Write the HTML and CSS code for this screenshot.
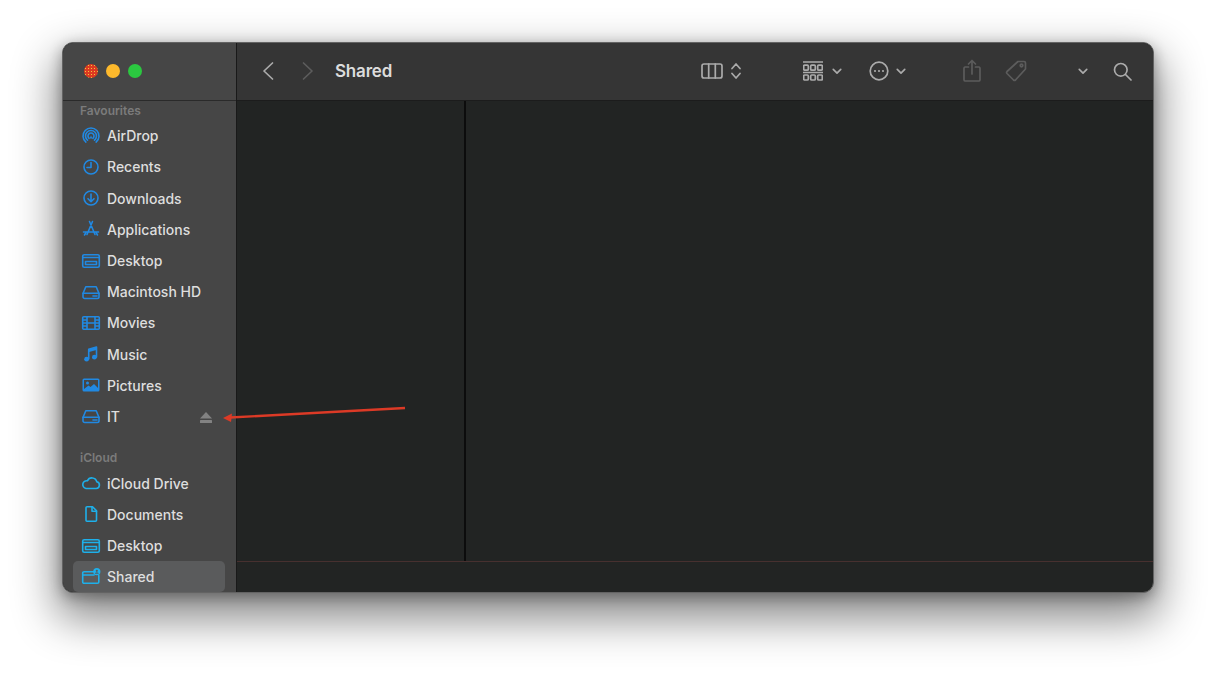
FILE: index.html
```html
<!DOCTYPE html>
<html lang="en">
<head>
<meta charset="utf-8">
<title>Shared</title>
<link rel="stylesheet" href="styles.css">
</head>
<body>
<svg class="defs" width="0" height="0" aria-hidden="true">
  <symbol id="i-desktop" viewBox="0 0 20 20"><rect x="1.700" y="3.700" width="16.600" height="12.600" rx="1.500"/><path d="M2 6.500H18"/><rect class="solid" x="4.500" y="10.500" width="11" height="3"/></symbol>
  <symbol id="i-drive" viewBox="0 0 20 20"><path d="M2 11.500 4.800 4.800H15.200L18 11.500V14.800A1.700 1.700 0 0 1 16.300 16.500H3.700A1.700 1.700 0 0 1 2 14.800Z"/><path d="M2 11.200H18"/><path class="fine" d="M12 14H16"/></symbol>
  <symbol id="i-chev" viewBox="0 0 12 8"><path d="M1.500 1.500 6 6 10.500 1.500"/></symbol>
</svg>

<div class="window">
  <aside class="sidebar">
    <div class="titlebar">
      <span class="light red"></span><span class="light yellow"></span><span class="light green"></span>
    </div>
    <section class="group">
      <h2 class="label">Favourites</h2>
      <div class="row"><svg class="ic" viewBox="0 0 20 20"><path d="M4.900 16.100A8 8 0 1 1 15.100 16.100"/><path d="M6.500 14.200A5.500 5.500 0 1 1 13.500 14.200"/><path d="M8.100 12.300A3 3 0 1 1 11.900 12.300"/><path class="solid" d="M10 9.500 11.400 12.500H8.600Z"/></svg><span>AirDrop</span></div>
      <div class="row"><svg class="ic" viewBox="0 0 20 20"><circle cx="10" cy="10" r="7"/><path d="M10 5.500V10.500H6"/></svg><span>Recents</span></div>
      <div class="row"><svg class="ic" viewBox="0 0 20 20"><circle cx="10" cy="10" r="7"/><path d="M10 6V13.500M7 10.700 10 13.700 13 10.700"/></svg><span>Downloads</span></div>
      <div class="row"><svg class="ic" viewBox="0 0 20 20"><path d="M8.500 2.500 14 15.500M11.500 2.500 6 15.500M2.500 13H17.500"/><path d="M3.500 16 5 13.500M16.500 16 15 13.500"/></svg><span>Applications</span></div>
      <div class="row"><svg class="ic"><use href="#i-desktop"/></svg><span>Desktop</span></div>
      <div class="row"><svg class="ic"><use href="#i-drive"/></svg><span>Macintosh HD</span></div>
      <div class="row"><svg class="ic" viewBox="0 0 20 20"><rect x="1.700" y="3.700" width="16.600" height="12.600" rx="1"/><path d="M6 4V16M14 4V16M6 10H14M2 7H6M2 10H6M2 13H6M14 7H18M14 10H18M14 13H18"/></svg><span>Movies</span></div>
      <div class="row"><svg class="ic" viewBox="0 0 20 20"><path d="M7.700 15V5.200L15.500 3V13"/><path d="M8 5.300 15.500 3.200V6L8 8Z" class="solid"/><circle class="solid" cx="5.600" cy="15.200" r="2.400"/><circle class="solid" cx="13.400" cy="13.200" r="2.400"/></svg><span>Music</span></div>
      <div class="row"><svg class="ic" viewBox="0 0 20 20"><rect class="solid" x="1.500" y="3.500" width="17" height="13" rx="1.500"/><rect class="hole" x="3" y="5" width="14" height="9"/><circle class="solid" cx="6.500" cy="8" r="1.500"/><path class="solid" d="M3 14 7.500 10.500 9.500 12 13 9 17 13V15H3Z"/></svg><span>Pictures</span></div>
      <div class="row"><svg class="ic"><use href="#i-drive"/></svg><span>IT</span><svg class="eject" viewBox="0 0 12 11"><path d="M6 0 12 6.500H0Z"/><rect y="8" width="12" height="3" rx=".5"/></svg></div>
    </section>
    <section class="group">
      <h2 class="label">iCloud</h2>
      <div class="row cloud"><svg class="ic" viewBox="0 0 20 20"><path d="M5 15.500H15.200A3.400 3.400 0 0 0 15.800 8.800 5 5 0 0 0 6.400 7.800 3.900 3.900 0 0 0 5 15.500Z"/></svg><span>iCloud Drive</span></div>
      <div class="row cloud"><svg class="ic" viewBox="0 0 20 20"><path d="M6 2.700H11.500L15.500 6.700V16.300A1 1 0 0 1 14.500 17.300H6A1 1 0 0 1 5 16.300V3.700A1 1 0 0 1 6 2.700Z"/><path d="M11 3V7.200H15.500"/></svg><span>Documents</span></div>
      <div class="row cloud"><svg class="ic"><use href="#i-desktop"/></svg><span>Desktop</span></div>
      <div class="row cloud selected"><svg class="ic" viewBox="0 0 20 20"><path d="M13 4.700H3A1.300 1.300 0 0 0 1.700 6V15A1.300 1.300 0 0 0 3 16.300H16.500A1.300 1.300 0 0 0 17.800 15V8.500"/><path d="M2 8H13"/><circle class="solid" cx="15.800" cy="4.700" r="3.600"/><circle class="person" cx="15.800" cy="3.800" r="1.100"/><path class="person" d="M13.800 6.800A2 1.600 0 0 1 17.800 6.800Z"/></svg><span>Shared</span></div>
    </section>
  </aside>

  <main class="main">
    <header class="toolbar">
      <svg class="tool back" viewBox="0 0 12 20"><path d="M10.500 2 2 10 10.500 18"/></svg>
      <svg class="tool forward off" viewBox="0 0 12 20"><path d="M1.500 2 10 10 1.500 18"/></svg>
      <h1 class="title">Shared</h1>
      <div class="tools">
        <svg class="tool cols" viewBox="0 0 22 16"><rect x="1" y="1" width="20" height="14" rx="2"/><path d="M7.700 1V15M14.300 1V15"/></svg>
        <svg class="tool updown" viewBox="0 0 10 18"><path d="M1 6.500 5 2 9 6.500M1 11.500 5 16 9 11.500"/></svg>
        <svg class="tool grp" viewBox="0 0 20 20"><path d="M0 1H20"/><rect x=".7" y="4.200" width="4.600" height="5" rx="1"/><rect x="7.700" y="4.200" width="4.600" height="5" rx="1"/><rect x="14.700" y="4.200" width="4.600" height="5" rx="1"/><path d="M0 11.500H20"/><rect x=".7" y="14" width="4.600" height="5" rx="1"/><rect x="7.700" y="14" width="4.600" height="5" rx="1"/><rect x="14.700" y="14" width="4.600" height="5" rx="1"/></svg>
        <svg class="tool chev c-grp"><use href="#i-chev"/></svg>
        <svg class="tool more" viewBox="0 0 20 20"><circle cx="10" cy="10" r="8.800"/><circle class="solid" cx="6" cy="10" r="1.100"/><circle class="solid" cx="10" cy="10" r="1.100"/><circle class="solid" cx="14" cy="10" r="1.100"/></svg>
        <svg class="tool chev c-more"><use href="#i-chev"/></svg>
        <svg class="tool share off" viewBox="0 0 18 23"><path d="M5.500 8H2A1.200 1.200 0 0 0 1 9.200V20.800A1.200 1.200 0 0 0 2 22H16A1.200 1.200 0 0 0 17 20.800V9.200A1.200 1.200 0 0 0 16 8H12.500"/><path d="M9 15V1.500M5.500 5 9 1.500 12.500 5"/></svg>
        <svg class="tool tag off" viewBox="0 0 22 22"><path d="M13 1.500H19A1.500 1.500 0 0 1 20.500 3V9L10.500 20A1.500 1.500 0 0 1 8.500 20L2 13.500A1.500 1.500 0 0 1 2 11.500Z"/><circle cx="16.500" cy="5.500" r="1.300"/></svg>
        <svg class="tool chev c-end"><use href="#i-chev"/></svg>
        <svg class="tool search" viewBox="0 0 19 19"><circle cx="7.800" cy="7.800" r="6.300"/><path d="M12.500 12.500 18 18"/></svg>
      </div>
    </header>
    <div class="browser">
      <div class="column"></div>
      <div class="detail"></div>
    </div>
    <footer class="status"></footer>
  </main>
</div>

<svg class="arrow" viewBox="0 0 190 20" aria-hidden="true">
  <path class="shaft" d="M8 12.500 183 3"/>
  <path class="head" d="M1 13 10 8.500 9 17Z"/>
</svg>
</body>
</html>
```

FILE: styles.css
```css
* { box-sizing: border-box; }

html, body {
  margin: 0;
  height: 100%;
  background: #fff;
  overflow: hidden;
}

body {
  padding: 42px 62px 0;
  font-family: Inter, "Liberation Sans", sans-serif;
  position: relative;
}

.defs { position: absolute; }

.window {
  width: 1092px;
  height: 551px;
  display: flex;
  border: 1px solid #636363;
  border-radius: 11px;
  overflow: hidden;
  box-shadow: 0 20px 44px 6px rgba(0, 0, 0, .46), 0 4px 14px rgba(0, 0, 0, .32);
  background: #222423;
}

/* Sidebar */
.sidebar {
  width: 173px;
  flex: none;
  background: #464646;
  overflow: hidden;
}

.titlebar {
  height: 57.500px;
  display: flex;
  align-items: center;
  padding: 0 0 0 21px;
  gap: 8px;
  border-bottom: 1px solid #2a2a2a;
}

.light {
  width: 14px;
  height: 14px;
  border-radius: 50%;
}

.red {
  background-color: #dc3a21;
  background-image: radial-gradient(circle, #f5c63c 0 .7px, transparent 1px);
  background-size: 3px 3px;
}
.yellow { background: #fdb92c; }
.green { background: #2bc840; }

.label {
  margin: 0;
  height: 19.700px;
  padding-left: 17px;
  font-size: 12px;
  line-height: 19px;
  font-weight: 600;
  color: #7b7b7b;
}

.group + .group { margin-top: 16px; }
.group + .group .label { height: 19.500px; }

.row {
  height: 31.200px;
  margin: 0 11px 0 10px;
  padding: 0 13px 0 8px;
  display: flex;
  align-items: center;
  gap: 6px;
  border-radius: 5px;
  font-size: 14px;
  font-weight: 450;
  color: #dedede;
}

.selected { background: #5a5b5c; }

.ic {
  width: 20px;
  height: 20px;
  flex: none;
  fill: none;
  stroke: #2189e2;
  stroke-width: 1.600;
  stroke-linejoin: round;
  stroke-linecap: round;
}

.cloud .ic { stroke: #1eb0ea; }

.ic .solid { fill: #2189e2; stroke: none; }
.ic .hole { fill: #464646; stroke: none; }
.ic .fine { stroke-width: 1; }
.ic .person { fill: #5a5b5c; stroke: none; }
.cloud .ic .solid { fill: #1eb0ea; }

.eject {
  width: 12px;
  height: 11px;
  margin-left: auto;
  fill: #828282;
  position: relative;
  top: 1px;
}

/* Main area */
.main {
  flex: 1;
  min-width: 0;
  display: flex;
  flex-direction: column;
  border-left: 1px solid #191919;
}

.toolbar {
  height: 57.500px;
  flex: none;
  display: flex;
  align-items: center;
  background: #353535;
  border-bottom: 1px solid #1c1c1c;
}

.title {
  margin: 0 0 0 21px;
  font-size: 17px;
  font-weight: 600;
  color: #dcdcdc;
  letter-spacing: -.2px;
}

.tools {
  margin-left: auto;
  display: flex;
  align-items: center;
}

.tool {
  flex: none;
  fill: none;
  stroke: #ababab;
  stroke-width: 1.700;
  stroke-linecap: round;
  stroke-linejoin: round;
}

.tool .solid { fill: #ababab; stroke: none; }
.tool.off { stroke: #5c5c5c; }

.back { width: 12px; height: 20px; margin-left: 25px; }
.forward { width: 12px; height: 20px; margin-left: 28px; }

.cols { width: 22px; height: 16px; }
.updown { width: 10px; height: 18px; margin-left: 8px; }
.grp { width: 20px; height: 20px; margin-left: 62px; }
.chev { width: 10px; height: 7px; stroke-width: 2; }
.c-grp { margin-left: 9px; }
.more { width: 20px; height: 20px; margin-left: 27px; }
.c-more { margin-left: 7px; }
.share { width: 18px; height: 23px; margin-left: 57px; margin-bottom: 2px; }
.tag { width: 22px; height: 22px; margin-left: 24px; }
.c-end { margin-left: 51px; }
.search { width: 19px; height: 19px; margin-left: 25px; margin-right: 21px; }

.browser {
  flex: 1;
  display: flex;
  min-height: 0;
}

.column {
  width: 229px;
  flex: none;
  border-right: 2px solid #0c0c0c;
}

.detail { flex: 1; }

.status {
  height: 31px;
  flex: none;
  border-top: 1px solid #47302f;
}

/* Annotation arrow over the window */
.arrow {
  position: absolute;
  left: 222px;
  top: 405px;
  width: 190px;
  height: 20px;
  overflow: visible;
}

.shaft { fill: none; stroke: #dc3a26; stroke-width: 2.400; }
.head { fill: #dc3a26; }
```
